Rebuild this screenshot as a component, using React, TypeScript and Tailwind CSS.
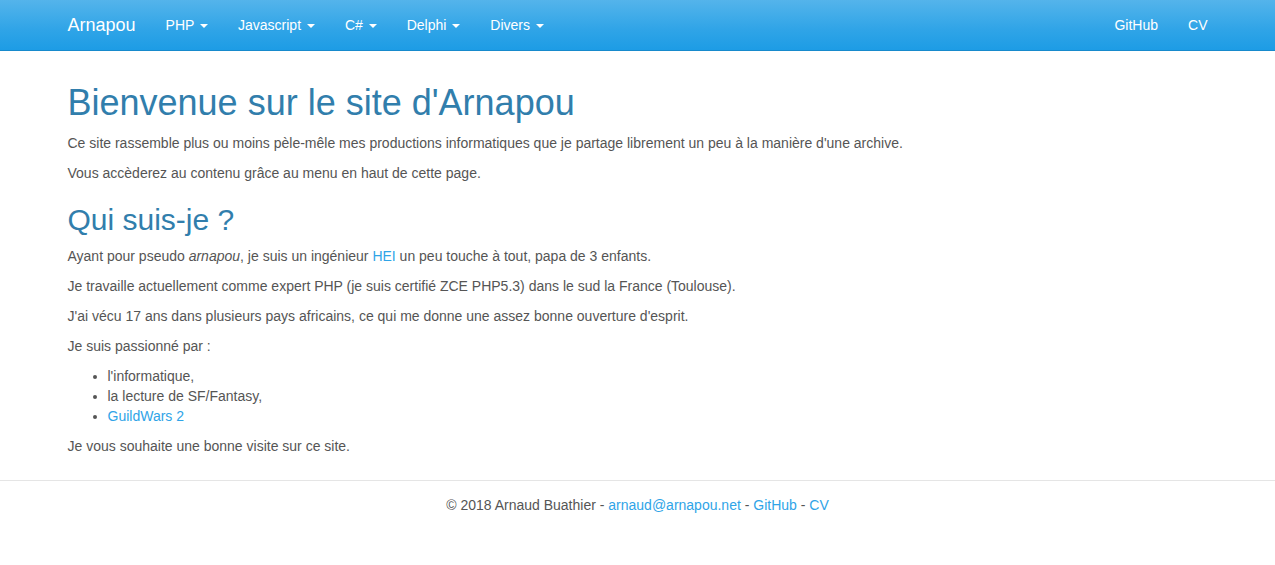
const menus = ["PHP", "Javascript", "C#", "Delphi", "Divers"]

function Caret() {
  return (
    <span className="ml-[2px] inline-block h-0 w-0 border-x-4 border-t-4 border-x-transparent border-t-white align-middle" />
  )
}

function Navbar() {
  return (
    <nav className="h-[51px] border-b border-[#178acc] bg-[linear-gradient(#54b4eb,#2fa4e7_60%,#1d9ce5)] text-white">
      <div className="mx-auto flex h-full w-[1170px] items-start px-[15px]">
        <a className="-ml-[15px] h-[50px] px-[15px] py-[15px] text-[18px] leading-[20px]">Arnapou</a>
        <ul className="flex">
          {menus.map((m) => (
            <li key={m}>
              <a className="block px-[15px] py-[15px] text-[14px] leading-[20px]">
                {m} <Caret />
              </a>
            </li>
          ))}
        </ul>
        <ul className="-mr-[15px] ml-auto flex">
          <li>
            <a className="block px-[15px] py-[15px] text-[14px] leading-[20px]">GitHub</a>
          </li>
          <li>
            <a className="block px-[15px] py-[15px] text-[14px] leading-[20px]">CV</a>
          </li>
        </ul>
      </div>
    </nav>
  )
}

export default function App() {
  return (
    <div className="min-h-[565px] bg-white font-['Liberation_Sans',Arial,sans-serif] text-[14px] leading-[20px] text-[#555555]">
      <Navbar />

      <main className="mx-auto w-[1170px] px-[15px] pt-[32px]">
        <h1 className="mb-[10px] text-[36px] leading-[1.1] text-[#317eac]">Bienvenue sur le site d'Arnapou</h1>
        <p className="mb-[10px]">
          Ce site rassemble plus ou moins pèle-mêle mes productions informatiques que je partage librement un peu à la
          manière d'une archive.
        </p>
        <p className="mb-[10px]">Vous accèderez au contenu grâce au menu en haut de cette page.</p>

        <h2 className="mt-[20px] mb-[10px] text-[30px] leading-[1.1] text-[#317eac]">Qui suis-je ?</h2>
        <p className="mb-[10px]">
          Ayant pour pseudo <em>arnapou</em>, je suis un ingénieur <a className="text-[#2fa4e7]">HEI</a> un peu touche à
          tout, papa de 3 enfants.
        </p>
        <p className="mb-[10px]">
          Je travaille actuellement comme expert PHP (je suis certifié ZCE PHP5.3) dans le sud la France (Toulouse).
        </p>
        <p className="mb-[10px]">J'ai vécu 17 ans dans plusieurs pays africains, ce qui me donne une assez bonne ouverture d'esprit.</p>
        <p className="mb-[10px]">Je suis passionné par :</p>
        <ul className="mb-[10px] list-disc pl-[40px]">
          <li>l'informatique,</li>
          <li>la lecture de SF/Fantasy,</li>
          <li>
            <a className="text-[#2fa4e7]">GuildWars 2</a>
          </li>
        </ul>
        <p className="mb-[10px]">Je vous souhaite une bonne visite sur ce site.</p>
      </main>

      {/* footer line sits full width under the content */}
      <footer className="mt-[24px] border-t border-[#e5e5e5] pt-[14px] text-center">
        © 2018 Arnaud Buathier - <a className="text-[#2fa4e7]">arnaud@arnapou.net</a> -{" "}
        <a className="text-[#2fa4e7]">GitHub</a> - <a className="text-[#2fa4e7]">CV</a>
      </footer>
    </div>
  )
}
